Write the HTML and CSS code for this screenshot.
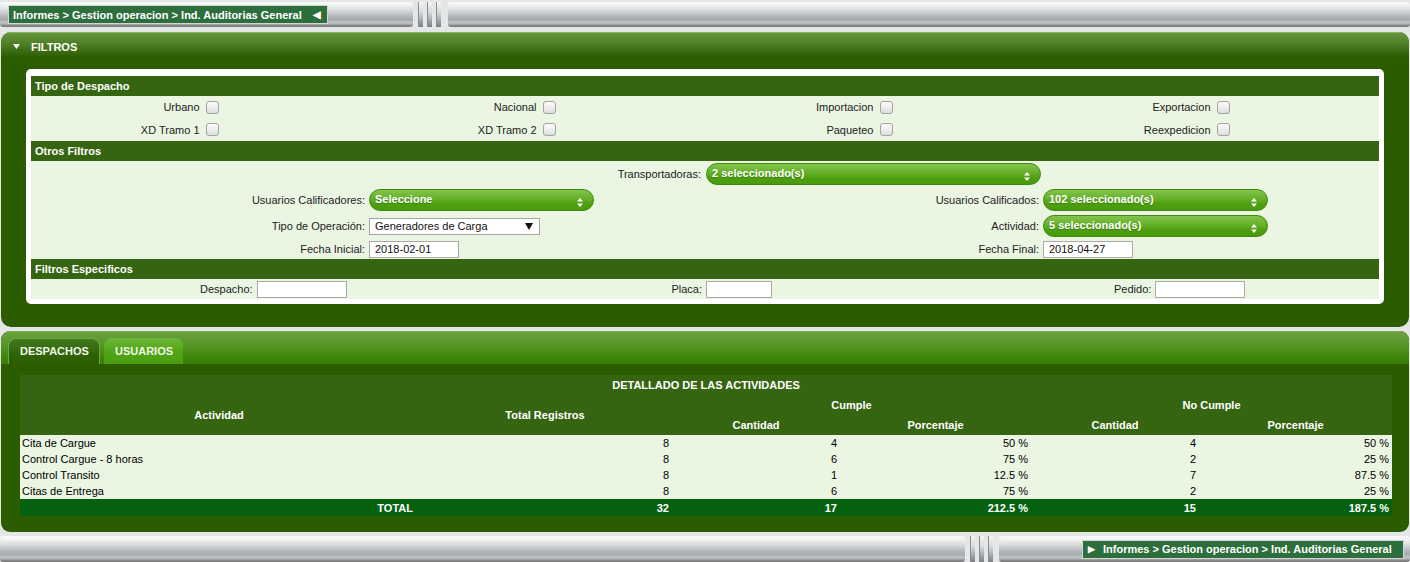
FILE: index.html
```html
<!DOCTYPE html>
<html lang="es">
<head>
<meta charset="utf-8">
<title>Ind. Auditorias General</title>
<link rel="stylesheet" href="styles.css">
</head>
<body>
<div class="railbar top">
  <div class="rail rail-left">
    <div class="crumb"><span class="crumb-text">Informes &gt; Gestion operacion &gt; Ind. Auditorias General</span><span class="tri">&#9664;</span></div>
  </div>
  <div class="grip"><i></i><i></i><i></i></div>
  <div class="rail rail-fill"></div>
</div>

<section class="panel filters">
  <div class="panel-head"><svg class="caret" width="7" height="5" viewBox="0 0 7 5"><path d="M0 0H7L3.5 5Z" fill="#fff"/></svg><span>FILTROS</span></div>
  <div class="panel-body">
    <div class="inner">
      <div class="sec">Tipo de Despacho</div>
      <div class="checks rows">
        <label class="lab">Urbano</label><span class="cbcell"><input type="checkbox" class="cb"></span>
        <label class="lab">Nacional</label><span class="cbcell"><input type="checkbox" class="cb"></span>
        <label class="lab">Importacion</label><span class="cbcell"><input type="checkbox" class="cb"></span>
        <label class="lab">Exportacion</label><span class="cbcell"><input type="checkbox" class="cb"></span>
        <label class="lab">XD Tramo 1</label><span class="cbcell"><input type="checkbox" class="cb"></span>
        <label class="lab">XD Tramo 2</label><span class="cbcell"><input type="checkbox" class="cb"></span>
        <label class="lab">Paqueteo</label><span class="cbcell"><input type="checkbox" class="cb"></span>
        <label class="lab">Reexpedicion</label><span class="cbcell"><input type="checkbox" class="cb"></span>
      </div>
      <div class="sec">Otros Filtros</div>
      <div class="form rows">
        <label class="flab span2">Transportadoras:</label>
        <div class="fval"><div class="pill wide"><span>2 seleccionado(s)</span><svg class="ud" width="6" height="9" viewBox="0 0 6 9"><path d="M3 0L6 3.5H0Z M3 9L0 5.5H6Z" fill="#fff"/></svg></div></div>
        <div class="fval"></div>

        <label class="flab">Usuarios Calificadores:</label>
        <div class="fval"><div class="pill"><span>Seleccione</span><svg class="ud" width="6" height="9" viewBox="0 0 6 9"><path d="M3 0L6 3.5H0Z M3 9L0 5.5H6Z" fill="#fff"/></svg></div></div>
        <label class="flab">Usuarios Calificados:</label>
        <div class="fval"><div class="pill"><span>102 seleccionado(s)</span><svg class="ud" width="6" height="9" viewBox="0 0 6 9"><path d="M3 0L6 3.5H0Z M3 9L0 5.5H6Z" fill="#fff"/></svg></div></div>

        <label class="flab">Tipo de Operación:</label>
        <div class="fval"><div class="sel"><span>Generadores de Carga</span><svg width="8" height="7" viewBox="0 0 8 7"><path d="M0 0H8L4 7Z" fill="#111"/></svg></div></div>
        <label class="flab">Actividad:</label>
        <div class="fval"><div class="pill"><span>5 seleccionado(s)</span><svg class="ud" width="6" height="9" viewBox="0 0 6 9"><path d="M3 0L6 3.5H0Z M3 9L0 5.5H6Z" fill="#fff"/></svg></div></div>

        <label class="flab short">Fecha Inicial:</label>
        <div class="fval short"><input class="txt" type="text" value="2018-02-01"></div>
        <label class="flab short">Fecha Final:</label>
        <div class="fval short"><input class="txt" type="text" value="2018-04-27"></div>
      </div>
      <div class="sec">Filtros Especificos</div>
      <div class="spec rows">
        <label class="flab">Despacho:</label>
        <div class="fval"><input class="txt" type="text" value=""></div>
        <label class="flab">Placa:</label>
        <div class="fval"><input class="txt small" type="text" value=""></div>
        <label class="flab">Pedido:</label>
        <div class="fval"><input class="txt" type="text" value=""></div>
      </div>
    </div>
  </div>
</section>

<section class="panel results">
  <div class="tabs">
    <div class="tab active">DESPACHOS</div>
    <div class="tab">USUARIOS</div>
  </div>
  <div class="results-body">
    <table class="grid">
      <colgroup><col class="c1"><col class="c2"><col class="c3"><col class="c4"><col class="c5"><col class="c6"></colgroup>
      <thead>
        <tr class="h1"><th colspan="6">DETALLADO DE LAS ACTIVIDADES</th></tr>
        <tr class="h2"><th rowspan="2">Actividad</th><th rowspan="2">Total Registros</th><th colspan="2">Cumple</th><th colspan="2">No Cumple</th></tr>
        <tr class="h3"><th>Cantidad</th><th>Porcentaje</th><th>Cantidad</th><th>Porcentaje</th></tr>
      </thead>
      <tbody>
        <tr><td class="l">Cita de Cargue</td><td>8</td><td>4</td><td>50 %</td><td>4</td><td>50 %</td></tr>
        <tr><td class="l">Control Cargue - 8 horas</td><td>8</td><td>6</td><td>75 %</td><td>2</td><td>25 %</td></tr>
        <tr><td class="l">Control Transito</td><td>8</td><td>1</td><td>12.5 %</td><td>7</td><td>87.5 %</td></tr>
        <tr><td class="l">Citas de Entrega</td><td>8</td><td>6</td><td>75 %</td><td>2</td><td>25 %</td></tr>
      </tbody>
      <tfoot>
        <tr><td class="tot">TOTAL</td><td>32</td><td>17</td><td>212.5 %</td><td>15</td><td>187.5 %</td></tr>
      </tfoot>
    </table>
  </div>
</section>

<div class="railbar bottom">
  <div class="rail rail-fill"></div>
  <div class="grip"><i></i><i></i><i></i></div>
  <div class="rail rail-right">
    <div class="crumb"><span class="tri">&#9654;</span><span class="crumb-text">Informes &gt; Gestion operacion &gt; Ind. Auditorias General</span></div>
  </div>
</div>
</body>
</html>
```

FILE: styles.css
```css
* { box-sizing: border-box; }
html, body { margin: 0; padding: 0; }
body {
  background: #e4e6e8;
  font-family: "Liberation Sans", Arial, sans-serif;
  font-size: 11px;
  color: #222;
  width: 1410px;
  height: 562px;
  overflow: hidden;
}

/* metallic rails */
.railbar { display: flex; height: 30px; padding: 2px 0 3px; }
.railbar.bottom { height: 28px; padding: 2px 0 0; margin-top: 2px; }
.rail {
  display: flex;
  align-items: center;
  border-radius: 3px;
  background: linear-gradient(#fbfbfb 0%, #eceeee 18%, #d2d5d6 38%, #b3b7b9 58%, #a6aaac 70%, #c2c5c6 84%, #8d8f90 93%, #6f7172 100%);
}
.top .rail-left { width: 413px; padding-left: 8px; }
.rail-fill { flex: 1; }
.bottom .rail-fill { flex: 0 0 965px; }
.bottom .rail-right { flex: 1; padding-left: 83px; }
.grip { display: flex; gap: 4px; padding: 0 4px 0 5px; width: 35px; }
.bottom .grip { width: 34px; }
.grip i {
  display: block;
  width: 5px;
  background: linear-gradient(#f4f4f4 0%, #d8dadb 40%, #a9adaf 70%, #7d7f80 100%);
  box-shadow: inset 1px 0 0 #8a8d8f;
}
.crumb {
  display: flex;
  align-items: center;
  height: 19px;
  background: #2d6e3d;
  border: 1px solid #d3d6d4;
  color: #fff;
  font-weight: bold;
  white-space: nowrap;
}
.top .crumb { width: 320px; padding-left: 4px; }
.top .crumb .tri { margin-left: 11px; font-size: 10px; }
.bottom .crumb { width: 322px; padding-left: 5px; }
.bottom .crumb .tri { margin-right: 8px; font-size: 9px; }

/* panels */
.panel {
  margin: 2px 1px 0;
  background: #2b5c00;
  border-radius: 10px;
  overflow: hidden;
}
.filters { height: 295px; }
.panel-head {
  height: 28px;
  display: flex;
  align-items: center;
  padding-left: 12px;
  color: #fff;
  font-weight: bold;
  border-top: 1px solid #84b65a;
  background: linear-gradient(#68953f 0%, #4e7e25 40%, #2d5d02 90%, #2b5c00 100%);
}
.caret { margin-right: 11px; }
.panel-body { padding: 9px 25px 0; }
.inner {
  background: #fff;
  border-radius: 5px;
  padding: 7px 5px 5px;
}
.sec {
  height: 20px;
  line-height: 20px;
  padding-left: 4px;
  background: #366512;
  color: #fff;
  font-weight: bold;
}
.rows { background: #eaf6e2; }

.checks {
  display: grid;
  grid-template-columns: repeat(8, 1fr);
  grid-auto-rows: 22.5px;
  align-items: center;
}
.lab { text-align: right; }
.cbcell { display: flex; align-items: center; }
.cb {
  appearance: none;
  -webkit-appearance: none;
  margin: 0 0 0 6px;
  width: 13px;
  height: 13px;
  border: 1px solid #a3a3a3;
  border-radius: 3px;
  background: linear-gradient(#fdfdfd, #dedede);
}

.form {
  display: grid;
  grid-template-columns: repeat(4, 1fr);
  grid-template-rows: 26px 26px 26px 20px;
  align-items: center;
}
.flab { text-align: right; padding-right: 3px; }
.flab.span2 { grid-column: span 2; padding-right: 4px; }
.fval { display: flex; align-items: center; padding-left: 1px; }
.pill {
  display: flex;
  justify-content: space-between;
  align-items: flex-start;
  width: 225px;
  height: 22px;
  padding: 3px 10px 0 5px;
  border: 1px solid #3f8a0e;
  border-radius: 11px;
  background: linear-gradient(#84c44e 0%, #64b026 45%, #4d9f10 70%, #4a9a0c 100%);
  color: #fff;
  font-weight: bold;
  text-shadow: 0 1px 1px rgba(0,0,0,0.25);
}
.pill.wide { width: 335px; }
.ud { margin-top: 5px; }
.sel {
  display: flex;
  justify-content: space-between;
  align-items: center;
  width: 171px;
  height: 17px;
  padding: 0 6px 0 5px;
  border: 1px solid #a6a6a6;
  background: #fff;
  color: #111;
}
.txt {
  width: 90px;
  height: 17px;
  margin: 0;
  padding: 0 5px;
  border: 1px solid #a9a9a9;
  background: #fff;
  font-family: "Liberation Sans", Arial, sans-serif;
  font-size: 11px;
  color: #111;
}
.txt.small { width: 66px; }

.spec {
  display: grid;
  grid-template-columns: repeat(6, 1fr);
  grid-template-rows: 20px;
  align-items: center;
}

/* results */
.results {
  margin-top: 4px;
  height: 201px;
  border-radius: 9px;
}
.tabs {
  display: flex;
  gap: 4px;
  align-items: flex-end;
  height: 33px;
  padding: 7px 0 0 7px;
  border-top: 1px solid #7aae4e;
  background: linear-gradient(#6aa23f 0%, #549424 45%, #3f8509 80%, #3a7f06 100%);
}
.tab {
  height: 26px;
  line-height: 26px;
  padding: 0 11px;
  border-radius: 8px 8px 0 0;
  font-weight: bold;
  color: #eef8e8;
}
.tab.active {
  width: 92px;
  background: linear-gradient(#427a20, #2f6308 60%, #2b5c00);
  border: 1px solid #6da645;
  border-bottom: none;
  line-height: 24px;
}
.tab:not(.active) {
  width: 79px;
  background: linear-gradient(#6fb83a, #52a516 50%, #4a9d0e);
  line-height: 26px;
}
.results-body { padding: 11px 17px 0 19px; }
.grid {
  width: 1372px;
  border-collapse: collapse;
  border-spacing: 0;
  table-layout: fixed;
}
.c1 { width: 398px; }
.c2 { width: 254px; }
.c3 { width: 168px; }
.c4 { width: 191px; }
.c5 { width: 168px; }
.c6 { width: 193px; }
.grid th {
  background: #366512;
  color: #fff;
  font-weight: bold;
  height: 20px;
  padding: 0;
  text-align: center;
}
.grid td {
  height: 16px;
  padding: 0 3px 0 2px;
  text-align: right;
  color: #000;
  white-space: nowrap;
}
.grid tbody td { background: #eaf6e2; }
.grid td.l { text-align: left; }
.grid tfoot td {
  height: 17px;
  background: #05610f;
  color: #fff;
  font-weight: bold;
}
.grid tfoot td.tot { padding-right: 5px; }
```
